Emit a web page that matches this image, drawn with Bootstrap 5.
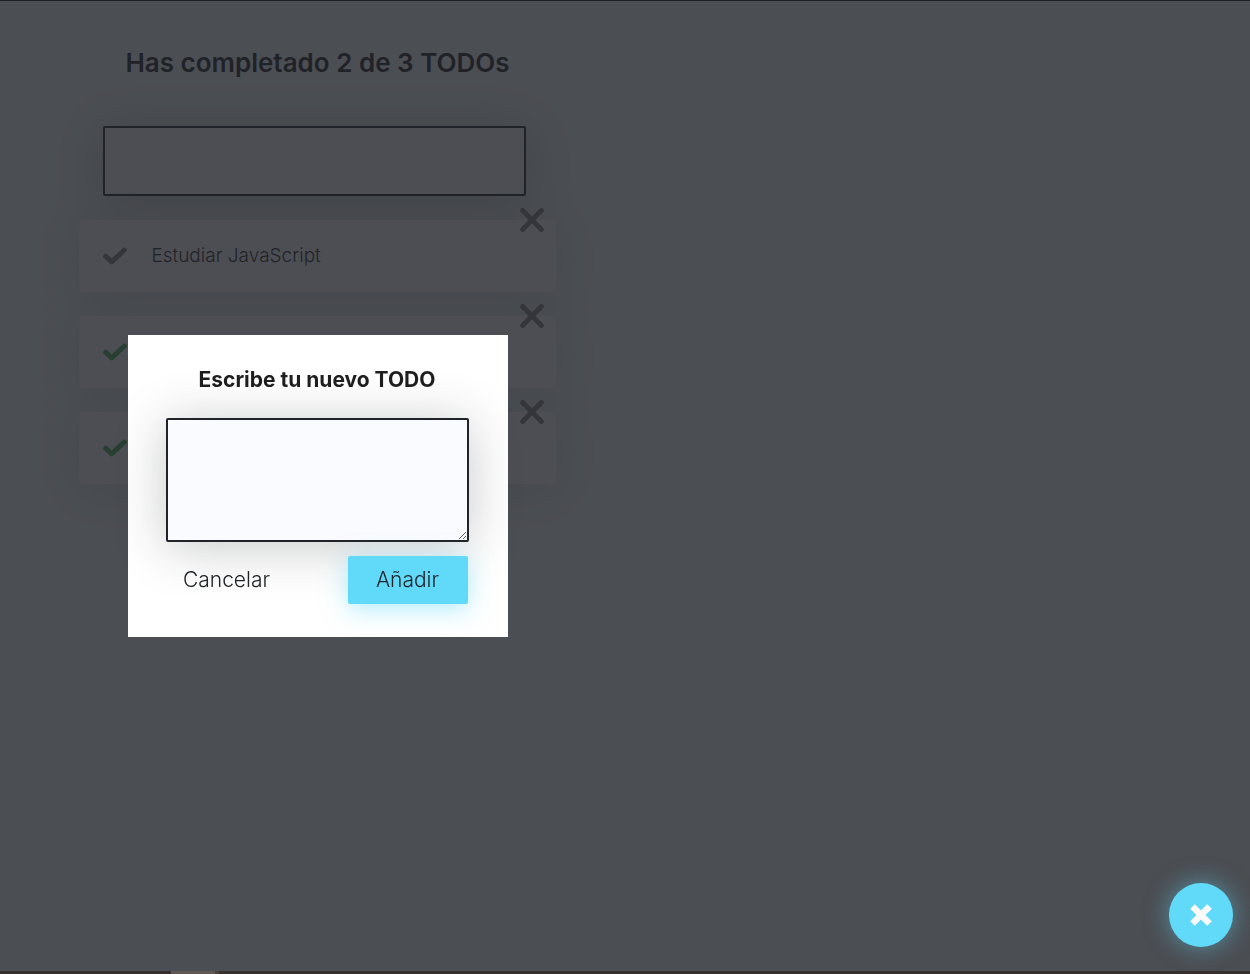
<!DOCTYPE html>
<html lang="es">
<head>
<meta charset="utf-8">
<meta name="viewport" content="width=device-width, initial-scale=1">
<title>TODOs</title>
<link href="https://cdn.jsdelivr.net/npm/bootstrap@5.3.0/dist/css/bootstrap.min.css" rel="stylesheet">
<style>
  body { font-family: Inter, "Open Sans", sans-serif; color: #1e1e1f; background: #f4f8f9; }
  .page { border-top: 1px solid #17141c; }
  .app-panel { width: 635px; max-width: 100%; }
  .counter { font-size: 26px; line-height: 30px; font-weight: 600; padding: 47px 0 48px; }
  .todo-area { width: 75%; }
  .search-box { height: 70px; width: calc(100% - 54px); margin: 0 24px 24px; border: 2px solid #202329; border-radius: 2px; background: #fafafa; box-shadow: 0 5px 50px rgba(32, 35, 41, .25); padding: 0 24px; font-size: 24px; }
  .todo-item { height: 72px; background: #fafafa; box-shadow: 0 5px 50px rgba(32, 35, 41, .15); }
  .todo-item p { font-size: 19px; line-height: 24px; font-weight: 300; }
  .check-btn { width: 72px; height: 72px; color: #808080; }
  .check-btn.done { color: #4caf50; }
  .remove-btn { top: -24px; right: 0; width: 48px; height: 48px; color: #808080; }
  .icon-btn { border: 0; padding: 0; background: none; }
  .icon-btn svg { display: block; margin: auto; }
  .overlay { background: rgba(32, 35, 41, .8); padding-bottom: 2px; z-index: 1; }
  .modal-form { width: 380px; background: #fff; padding: 33px 39px 33px 38px; font-size: 21px; }
  .modal-form label { font-weight: 700; line-height: 24px; margin-bottom: 26px; }
  .modal-form textarea { height: 124px; background: #fafbfe; border: 2px solid #202329; border-radius: 2px; box-shadow: 0 5px 50px rgba(32, 35, 41, .25); padding: 12px; display: block; }
  .form-actions { margin-top: 14px; padding: 0 1px; }
  .form-action { width: 120px; height: 48px; border: 0; border-radius: 2px; font-weight: 300; background: transparent; color: #202329; }
  .form-action.add { background: #61dafa; box-shadow: 0 5px 25px rgba(97, 218, 250, .5); }
  .fab { width: 64px; height: 64px; right: 17px; bottom: 27px; border-radius: 50%; background: #61dafa; box-shadow: 0 0 25px rgba(97, 218, 250, .5); z-index: 2; }
  .bottom-strip { height: 3px; background: #352f2d; z-index: 2; }
  .bottom-strip span { width: 48px; margin-left: 171px; background: #5e5753; border-right: 4px solid #48423f; }
</style>
</head>
<body>
<svg class="d-none" aria-hidden="true">
  <symbol id="tick" viewBox="0 0 24 24"><path d="M2.7 12.2 8.7 17.9 21.3 6" fill="none" stroke="currentColor" stroke-width="5" stroke-linecap="round" stroke-linejoin="round"/></symbol>
  <symbol id="cross" viewBox="0 0 24 24"><path d="M2.6 2.6 21.4 21.4M21.4 2.6 2.6 21.4" fill="none" stroke="currentColor" stroke-width="5" stroke-linecap="round"/></symbol>
</svg>
<main class="page min-vh-100">
  <div class="app-panel">
    <h1 class="counter text-center m-0">Has completado 2 de 3 TODOs</h1>
    <div class="todo-area mx-auto">
      <input class="search-box d-block" type="text" aria-label="Buscar TODO">
      <ul class="list-unstyled d-flex flex-column gap-4 m-0">
        <li class="todo-item d-flex align-items-center position-relative">
          <button class="icon-btn check-btn" aria-label="Completar"><svg width="24" height="24"><use href="#tick"/></svg></button>
          <p class="m-0">Estudiar JavaScript</p>
          <button class="icon-btn remove-btn position-absolute" aria-label="Eliminar"><svg width="24" height="24"><use href="#cross"/></svg></button>
        </li>
        <li class="todo-item d-flex align-items-center position-relative">
          <button class="icon-btn check-btn done" aria-label="Completado"><svg width="24" height="24"><use href="#tick"/></svg></button>
          <button class="icon-btn remove-btn position-absolute" aria-label="Eliminar"><svg width="24" height="24"><use href="#cross"/></svg></button>
        </li>
        <li class="todo-item d-flex align-items-center position-relative">
          <button class="icon-btn check-btn done" aria-label="Completado"><svg width="24" height="24"><use href="#tick"/></svg></button>
          <button class="icon-btn remove-btn position-absolute" aria-label="Eliminar"><svg width="24" height="24"><use href="#cross"/></svg></button>
        </li>
      </ul>
    </div>
  </div>
</main>
<div class="overlay position-fixed top-0 start-0 w-100 h-100">
  <div class="app-panel h-100 d-flex align-items-center justify-content-center">
    <form class="modal-form">
      <label class="d-block text-center" for="new-todo">Escribe tu nuevo TODO</label>
      <textarea class="w-100" id="new-todo"></textarea>
      <div class="form-actions d-flex justify-content-between">
        <button type="button" class="form-action">Cancelar</button>
        <button type="submit" class="form-action add">Añadir</button>
      </div>
    </form>
  </div>
</div>
<button class="icon-btn fab position-fixed" aria-label="Cerrar"><svg width="24" height="24" viewBox="0 0 24 24"><path d="M3.5 3.5 20.5 20.5M20.5 3.5 3.5 20.5" stroke="#fafafa" stroke-width="6.5"/></svg></button>
<div class="bottom-strip position-fixed bottom-0 start-0 w-100 d-flex" aria-hidden="true"><span></span></div>
<script src="https://cdn.jsdelivr.net/npm/bootstrap@5.3.0/dist/js/bootstrap.bundle.min.js"></script>
</body>
</html>
